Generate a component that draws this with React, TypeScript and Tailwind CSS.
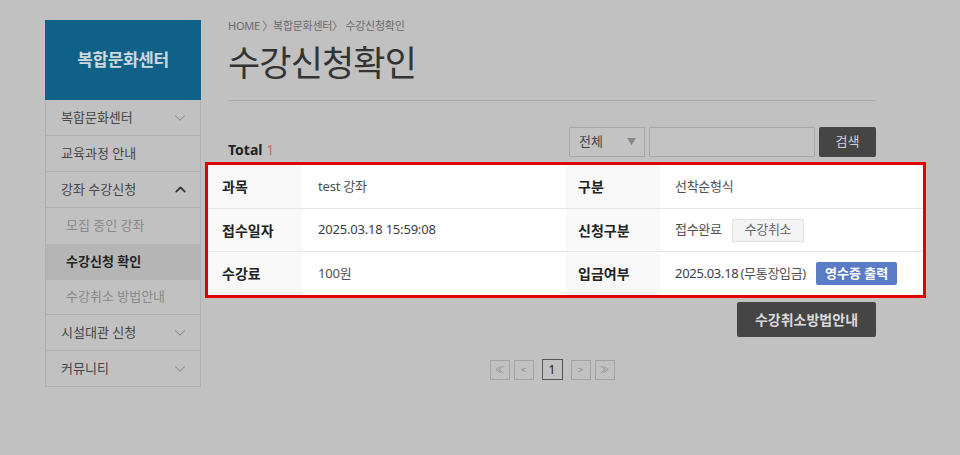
import { ChevronDown, ChevronUp } from 'lucide-react'

type Item = { label: string; icon?: 'up' | 'down'; sub?: boolean; active?: boolean; lastSub?: boolean }

const menu: Item[] = [
  { label: '복합문화센터', icon: 'down' },
  { label: '교육과정 안내' },
  { label: '강좌 수강신청', icon: 'up' },
  { label: '모집 중인 강좌', sub: true },
  { label: '수강신청 확인', sub: true, active: true },
  { label: '수강취소 방법안내', sub: true, lastSub: true },
  { label: '시설대관 신청', icon: 'down' },
  { label: '커뮤니티', icon: 'down' },
]

function Sidebar() {
  return (
    <aside className="mt-[20px] ml-[45px] w-[156px] shrink-0">
      <div className="h-[80px] bg-[#0f6188] flex items-center justify-center">
        <span className="text-[17px] font-bold text-[#cdd9df] tracking-tight">복합문화센터</span>
      </div>
      <ul className="border-x border-[#b0b0b0]">
        {menu.map((m) =>
          m.sub ? (
            <li
              key={m.label}
              className={
                'flex items-center pl-[20px] text-[13px] ' +
                (m.lastSub ? 'h-[35px] border-b border-[#b0b0b0] ' : 'h-[36px] ') +
                (m.active ? 'bg-[#b5b5b5] font-bold text-[#222]' : 'text-[#898989]')
              }
            >
              {m.label}
            </li>
          ) : (
            <li
              key={m.label}
              className="h-[36px] border-b border-[#b0b0b0] flex items-center justify-between pl-[15px] pr-[11px] text-[13px] text-[#464646]"
            >
              <span>{m.label}</span>
              {m.icon === 'down' && <ChevronDown size={18} strokeWidth={1.4} className="text-[#888]" />}
              {m.icon === 'up' && <ChevronUp size={17} strokeWidth={2.6} className="text-[#333]" />}
            </li>
          ),
        )}
      </ul>
    </aside>
  )
}

function Row({
  l1,
  v1,
  l2,
  v2,
  h,
  last,
}: {
  l1: string
  v1: React.ReactNode
  l2: string
  v2: React.ReactNode
  h: string
  last?: boolean
}) {
  return (
    <div className={'flex ' + h + (last ? '' : ' border-b border-[#e4e4e4]')}>
      <div className="w-[94px] bg-[#f8f8f8] flex items-center pl-[14px] text-[14px] font-bold text-[#222]">{l1}</div>
      <div className="w-[264px] flex items-center pl-[16px] text-[13px] text-[#505050] tracking-[-0.2px]">{v1}</div>
      <div className="w-[94px] bg-[#f8f8f8] flex items-center pl-[12px] text-[14px] font-bold text-[#222]">{l2}</div>
      <div className="flex-1 flex items-center pl-[15px] text-[13px] text-[#505050] tracking-[-0.3px]">{v2}</div>
    </div>
  )
}

export default function App() {
  return (
    <div
      className="w-[960px] h-[455px] bg-[#c1c1c1] flex overflow-hidden"
      style={{ fontFamily: '"Noto Sans", "Noto Sans CJK KR", sans-serif' }}
    >
      <Sidebar />

      <main className="ml-[27px] w-[648px] shrink-0">
        <div className="mt-[19px] text-[11px] leading-[14px] text-[#6a6a6a] tracking-tight">
          HOME 〉복합문화센터〉 수강신청확인
        </div>
        <h1 className="mt-[10px] text-[35px] leading-[40px] text-[#333] font-normal tracking-tight">수강신청확인</h1>
        <div className="mt-[17px] h-px bg-[#a9a9a9]" />

        <div className="mt-[26px] flex items-end justify-between">
          <div className="text-[14px] font-bold text-[#222] leading-[16px] -mb-[1px]">
            Total <span className="font-normal text-[#c07272]">1</span>
          </div>
          <div className="flex items-center">
            <div className="w-[76px] h-[30px] border border-[#a8a8a8] bg-[#c3c3c3] flex items-center justify-between pl-[9px] pr-[8px] text-[13px] text-[#444]">
              <span>전체</span>
              <span className="text-[9px] text-[#858585]">▼</span>
            </div>
            <div className="ml-[4px] w-[166px] h-[30px] border border-[#a8a8a8] bg-[#c3c3c3]" />
            <button className="ml-[4px] w-[57px] h-[30px] bg-[#454545] rounded-[2px] text-[13px] text-[#cfcfcf]">검색</button>
          </div>
        </div>

        <div className="mt-[5px] -ml-[23px] w-[721px] border-[3px] border-[#e00000] bg-white">
          <Row h="h-[44px]" l1="과목" v1="test 강좌" l2="구분" v2="선착순형식" />
          <Row
            h="h-[43px]"
            l1="접수일자"
            v1={<span className="text-[#3a3d45]">2025.03.18 15:59:08</span>}
            l2="신청구분"
            v2={
              <>
                <span>접수완료</span>
                <span className="ml-[10px] h-[23px] px-[12px] flex items-center border border-[#e0e0e0] bg-[#f3f3f3] text-[#666]">
                  수강취소
                </span>
              </>
            }
          />
          <Row
            h="h-[43px]"
            l1="수강료"
            v1="100원"
            l2="입금여부"
            v2={
              <>
                <span className="text-[#3a3d45]">2025.03.18</span>
                <span className="ml-[2px]">(무통장입금)</span>
                <span className="ml-[10px] h-[23px] px-[9px] flex items-center bg-[#5a7bc6] rounded-[2px] text-white font-bold tracking-normal">
                  영수증 출력
                </span>
              </>
            }
            last
          />
        </div>

        <div className="mt-[4px] flex justify-end">
          <button className="w-[139px] h-[35px] bg-[#454545] rounded-[2px] text-[14px] font-bold text-[#dadada]">
            수강취소방법안내
          </button>
        </div>

        <div className="mt-[22px] flex justify-center items-center">
          <div className="flex items-center gap-[4px]">
            <span className="w-[20px] h-[20px] border border-[#a3a3a3] flex items-center justify-center text-[9px] text-[#888]">≪</span>
            <span className="w-[20px] h-[20px] border border-[#a3a3a3] flex items-center justify-center text-[9px] text-[#888]">&lt;</span>
            <span className="mx-[4px] w-[21px] h-[21px] border border-[#555] flex items-center justify-center text-[12px] text-[#222]">1</span>
            <span className="w-[20px] h-[20px] border border-[#a3a3a3] flex items-center justify-center text-[9px] text-[#888]">&gt;</span>
            <span className="w-[20px] h-[20px] border border-[#a3a3a3] flex items-center justify-center text-[9px] text-[#888]">≫</span>
          </div>
        </div>
      </main>
    </div>
  )
}
